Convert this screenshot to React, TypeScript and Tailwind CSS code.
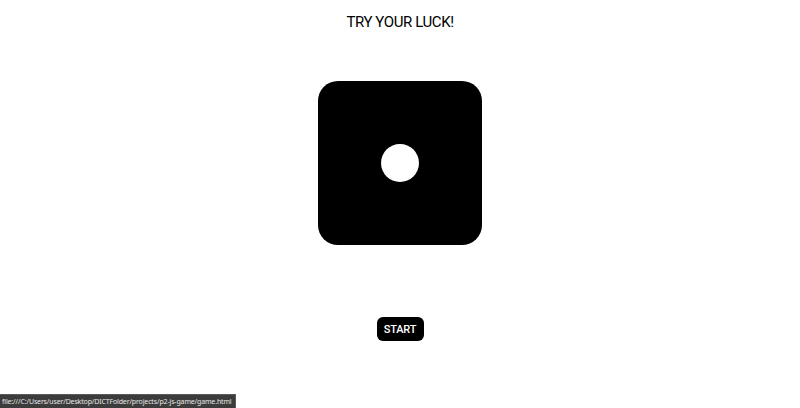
import React from "react";

export default function App() {
  return (
    <div className="relative w-[800px] h-[408px] bg-white overflow-hidden" style={{ fontFamily: "Roboto, 'Noto Sans', sans-serif" }}>
      <div className="flex flex-col items-center">
        <h1 className="mt-[12px] text-[15px] leading-[20px] tracking-[-0.4px] text-black font-normal">TRY YOUR LUCK!</h1>
        <div className="mt-[49px] w-[164px] h-[164px] rounded-[20px] bg-black flex items-center justify-center">
          <div className="w-[38px] h-[38px] rounded-full bg-white" />
        </div>
        <button className="mt-[72px] w-[47px] h-[24px] rounded-[6px] bg-black text-white text-[11px] font-medium leading-none tracking-[-0.2px]">
          START
        </button>
      </div>
      <div className="absolute left-0 bottom-0 h-[14px] bg-[#3c3c3c] border-t border-r border-[#5a5a5a] text-[#e6e6e6] text-[7px] leading-[13px] pl-[2px] pr-[3px] tracking-[-0.15px] whitespace-nowrap" style={{ fontFamily: "'Noto Sans', sans-serif" }}>
        file:///C:/Users/user/Desktop/DICTFolder/projects/p2-js-game/game.html
      </div>
    </div>
  );
}
